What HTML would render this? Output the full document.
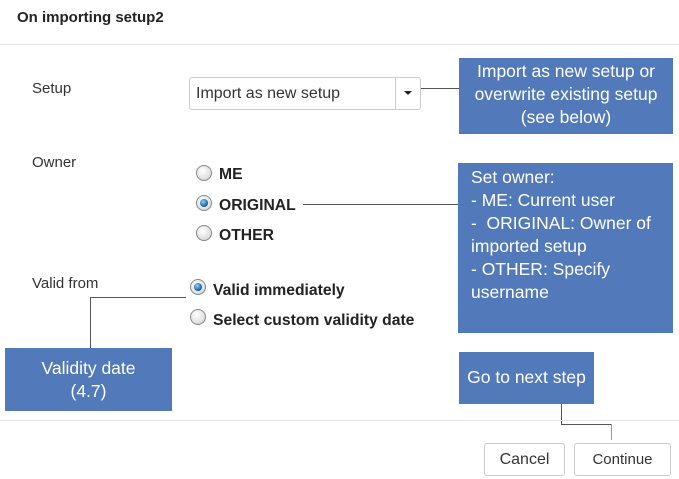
<!DOCTYPE html>
<html><head><style>
body{margin:0;width:679px;height:479px;background:#fff;position:relative;overflow:hidden;font-family:"Liberation Sans",Arial,sans-serif;color:#333}
.a{position:absolute}
.lbl{font-size:15px;color:#333}
.blue{position:absolute;background:#5279b9;color:#fff;font-family:"Liberation Sans",sans-serif;font-size:17.5px;line-height:23px}
.radio{position:absolute;width:16px;height:16px;border-radius:50%;border:1px solid #888;background:radial-gradient(circle at 40% 35%,#fff,#ddd 70%,#aaa);box-sizing:border-box}
.radio.on::after{content:"";position:absolute;left:3px;top:3px;width:8px;height:8px;border-radius:50%;background:radial-gradient(circle at 40% 35%,#8fd0ff,#0a5a9c 70%,#03304f)}
.rl{position:absolute;font-weight:bold;font-size:15.7px;color:#222}
.ln{position:absolute;background:#555}
.btn{position:absolute;border:1px solid #ccc;border-radius:3px;background:#fff;font-size:15px;color:#333;text-align:center;box-sizing:border-box;line-height:31px}
</style></head><body>
<div class="a" style="left:17px;top:9px;font-size:15px;font-weight:bold;color:#222">On importing setup2</div>
<div class="a" style="left:0;top:44px;width:679px;height:1px;background:#e5e5e5"></div>

<div class="a lbl" style="left:32px;top:80px">Setup</div>
<div class="a" style="left:189px;top:77px;width:232px;height:33px;border:1px solid #ccc;border-radius:3px;box-sizing:border-box">
<div class="a" style="left:6px;top:7px;font-size:16px;color:#333">Import as new setup</div>
<div class="a" style="left:205px;top:0;width:1px;height:31px;background:#ccc"></div>
<div class="a" style="left:214px;top:13px;width:0;height:0;border-left:4px solid transparent;border-right:4px solid transparent;border-top:4px solid #222"></div>
</div>
<div class="ln" style="left:421px;top:88px;width:38px;height:1px"></div>
<div class="blue" style="left:459px;top:58px;width:214px;height:76px;text-align:center;padding-top:2px;box-sizing:border-box">Import as new setup or overwrite existing setup (see below)</div>

<div class="a lbl" style="left:32px;top:154px">Owner</div>
<div class="radio" style="left:196px;top:165px"></div><div class="rl" style="left:219px;top:166px">ME</div>
<div class="radio on" style="left:196px;top:195px"></div><div class="rl" style="left:219px;top:197px">ORIGINAL</div>
<div class="radio" style="left:196px;top:225px"></div><div class="rl" style="left:219px;top:227px">OTHER</div>
<div class="ln" style="left:303px;top:204px;width:155px;height:1px"></div>
<div class="blue" style="left:458px;top:163px;width:215px;height:170px;padding:3px 0 0 13px;box-sizing:border-box">Set owner:<br>- ME: Current user<br>-&nbsp; ORIGINAL: Owner of imported setup<br>- OTHER: Specify username</div>

<div class="a lbl" style="left:32px;top:275px">Valid from</div>
<div class="radio on" style="left:190px;top:279px"></div><div class="rl" style="left:213px;top:282px">Valid immediately</div>
<div class="radio" style="left:190px;top:309px"></div><div class="rl" style="left:213px;top:312px">Select custom validity date</div>
<div class="ln" style="left:90px;top:297px;width:96px;height:1px"></div>
<div class="ln" style="left:90px;top:297px;width:1px;height:51px"></div>
<div class="blue" style="left:5px;top:348px;width:167px;height:63px;text-align:center;padding-top:9px;box-sizing:border-box">Validity date<br>(4.7)</div>

<div class="blue" style="left:459px;top:352px;width:135px;height:52px;text-align:center;padding-top:14px;box-sizing:border-box">Go to next step</div>
<div class="ln" style="left:561px;top:404px;width:1px;height:20px"></div>
<div class="ln" style="left:561px;top:424px;width:51px;height:1px"></div>
<div class="ln" style="left:611px;top:424px;width:1px;height:16px;background:#999"></div>
<div class="a" style="left:0;top:420px;width:679px;height:1px;background:#e5e5e5"></div>
<div class="btn" style="left:484px;top:443px;width:81px;height:33px;font-size:16px">Cancel</div>
<div class="btn" style="left:574px;top:443px;width:97px;height:33px">Continue</div>
</body></html>
